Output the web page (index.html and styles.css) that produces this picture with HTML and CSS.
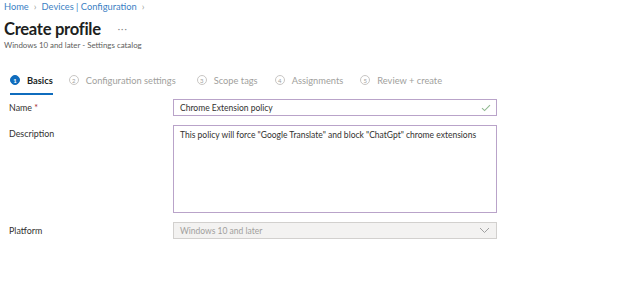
FILE: index.html
```html
<!DOCTYPE html>
<html>
<head>
<meta charset="utf-8">
<link rel="stylesheet" href="styles.css">
</head>
<body>
<div class="page">
  <nav class="crumbs">
    <a>Home</a><span class="sep">›</span><a>Devices | Configuration</a><span class="sep">›</span>
  </nav>
  <div class="title-row">
    <h1>Create profile</h1><span class="more">···</span>
  </div>
  <div class="subtitle">Windows 10 and later - Settings catalog</div>

  <div class="tabs">
    <div class="tab active"><span class="num">1</span><span class="lbl">Basics</span></div>
    <div class="tab"><span class="num">2</span><span class="lbl">Configuration settings</span></div>
    <div class="tab"><span class="num">3</span><span class="lbl">Scope tags</span></div>
    <div class="tab"><span class="num">4</span><span class="lbl">Assignments</span></div>
    <div class="tab"><span class="num">5</span><span class="lbl">Review + create</span></div>
  </div>

  <div class="form">
    <div class="row">
      <label class="label">Name <span class="req">*</span></label>
      <div class="field input">
        <span class="value">Chrome Extension policy</span>
        <svg class="check" width="10" height="8" viewBox="0 0 10 8"><path d="M1 4.2 L3.6 6.6 L9 1.2" fill="none" stroke="#8fb88f" stroke-width="1.1"/></svg>
      </div>
    </div>
    <div class="row">
      <label class="label">Description</label>
      <div class="field textarea">This policy will force "Google Translate" and block "ChatGpt" chrome extensions</div>
    </div>
    <div class="row">
      <label class="label">Platform</label>
      <div class="field select">
        <span class="value">Windows 10 and later</span>
        <svg class="chev" width="11" height="7" viewBox="0 0 11 7"><path d="M1 1 L5.5 5.5 L10 1" fill="none" stroke="#a0a0a0" stroke-width="1"/></svg>
      </div>
    </div>
  </div>
</div>
</body>
</html>
```

FILE: styles.css
```css
* { box-sizing: border-box; }
html, body { margin: 0; background: #fff; }
body {
  font-family: "Lato", "Open Sans", sans-serif;
  color: #323130;
  width: 624px;
  height: 295px;
  overflow: hidden;
}
.page { padding: 0 0 0 4px; }
.crumbs {
  font-size: 9.3px;
  line-height: 13px;
  color: #3b7fc4;
  display: flex;
  align-items: center;
}
.crumbs .sep {
  color: #a19f9d;
  font-size: 10px;
  margin: 0 5px;
}
.title-row {
  display: flex;
  align-items: center;
  margin-top: 5px;
  height: 21px;
}
h1 {
  margin: 0;
  font-size: 16.6px;
  font-weight: 700;
  color: #201f1e;
  letter-spacing: -0.3px;
}
.more {
  margin-left: 17px;
  font-size: 9px;
  color: #888;
  letter-spacing: 1px;
}
.subtitle {
  font-size: 7.9px;
  color: #605e5c;
  margin-top: 1px;
  line-height: 10px;
}
.tabs {
  display: flex;
  margin-top: 17px;
  padding-left: 6px;
}
.tab {
  display: flex;
  align-items: center;
  gap: 7px;
  height: 28px;
  font-size: 9.3px;
  color: #a19f9d;
  border-bottom: 2px solid transparent;
  margin-right: 17px;
}
.tab:nth-child(2) { margin-right: 21px; }
.tab.active {
  border-bottom-color: #0f6cbd;
  color: #201f1e;
  font-weight: 700;
  margin-right: 16px;
}
.num {
  width: 10px;
  height: 10px;
  border-radius: 50%;
  border: 1px solid #c8c6c4;
  font-size: 6px;
  display: flex;
  align-items: center;
  justify-content: center;
  color: #a19f9d;
  font-weight: 400;
}
.tab.active .num {
  background: #0f6cbd;
  border-color: #0f6cbd;
  color: #fff;
  font-weight: 700;
}
.form {
  margin-top: 4px;
  display: flex;
  flex-direction: column;
  gap: 9px;
}
.row {
  display: grid;
  grid-template-columns: 169px 324px;
  align-items: start;
}
.label {
  font-size: 8.9px;
  color: #323130;
  padding-left: 5px;
  padding-top: 3px;
}
.req { color: #a4262c; }
.field {
  border: 1px solid #b9a3c9;
  font-size: 8.5px;
  color: #323130;
  padding: 0 6px;
}
.input, .select {
  height: 17px;
  display: flex;
  align-items: center;
  justify-content: space-between;
}
.textarea {
  height: 88px;
  padding-top: 4px;
  line-height: 11px;
}
.select {
  background: #f3f2f1;
  border-color: #d2d0ce;
  color: #a19f9d;
}
.check { margin-right: -1px; }
```
